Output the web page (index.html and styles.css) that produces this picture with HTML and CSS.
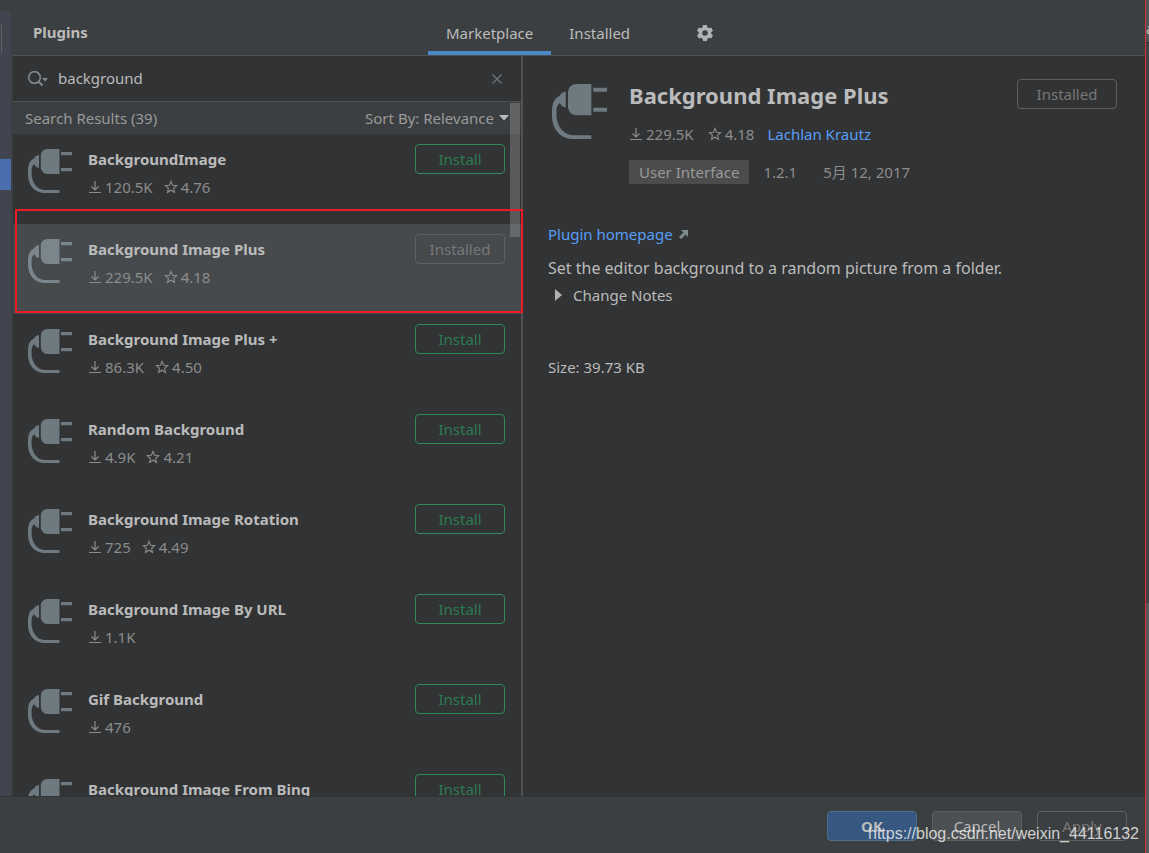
FILE: index.html
```
<!DOCTYPE html>
<html lang="en">
<head>
<meta charset="utf-8">
<title>Plugins</title>
<link rel="stylesheet" href="styles.css">
</head>
<body>
<svg class="sprite" aria-hidden="true">
  <symbol id="plug" viewBox="0 0 44 44">
    <path d="M19.500 0H31.500V25H19.500C15.500 25 12.800 21.500 12.800 18V7C12.800 3 15.500 0 19.500 0ZM33 3H44V6.200H33ZM33 19H44V22.200H33ZM11 6V19C8.500 18.500 7 17 6.300 15.200C4.500 16.500 3.600 18.500 3.600 21.500V26C4.300 34.500 9.500 40.500 16.500 41H31.500V44H15.500C7 43.500 .5 36.500 0 27V20.500C.3 14.500 2.500 11 6 9.500C7 7.500 8.500 6.300 11 6Z"/>
  </symbol>
  <symbol id="down" viewBox="0 0 14 14">
    <path d="M7 1V9.500M3.500 6.500L7 10L10.500 6.500M1 12.500H13" fill="none" stroke="currentColor" stroke-width="1.200"/>
  </symbol>
  <symbol id="star" viewBox="0 0 14 14">
    <path d="M7 1.500L8.600 5.300L12.700 5.600L9.600 8.300L10.500 12.300L7 10.200L3.500 12.300L4.400 8.300L1.300 5.600L5.400 5.300Z" fill="none" stroke="currentColor" stroke-width="1.100"/>
  </symbol>
</svg>
<div class="workspace">
  <div class="tree-edge"><span class="tree-field"></span><span class="tree-selection"></span></div>
  <main class="plugins">
    <header class="topbar">
      <h1 class="heading">Plugins</h1>
      <nav class="tabs">
        <button class="tab tab-active" type="button">Marketplace</button>
        <button class="tab" type="button">Installed</button>
        <button class="gear" type="button" aria-label="Settings"><svg width="18" height="18" viewBox="0 0 18 18"><path fill-rule="evenodd" d="M7 1H11L11.400 3.300L13 4.200L15.200 3.400L17 6.700L15.200 8.200V9.800L17 11.300L15.200 14.600L13 13.800L11.400 14.700L11 17H7L6.600 14.700L5 13.800L2.800 14.600L1 11.300L2.800 9.800V8.200L1 6.700L2.800 3.400L5 4.200L6.600 3.300ZM9 6.200A2.800 2.800 0 1 0 9 11.800A2.800 2.800 0 1 0 9 6.200Z"/></svg></button>
      </nav>
    </header>
    <div class="columns">
      <section class="results">
        <div class="search">
          <svg class="search-icon" width="20" height="16" viewBox="0 0 20 16"><circle cx="6.500" cy="6.500" r="5.800" fill="none" stroke="currentColor" stroke-width="1.500"/><path d="M10.500 10.500L14.500 14.500" stroke="currentColor" stroke-width="2"/><path d="M14 7H20L17 10.500Z" fill="currentColor"/></svg>
          <input class="search-input" type="text" aria-label="Search plugins" value="background">
          <button class="clear" type="button" aria-label="Clear"><svg width="10" height="10" viewBox="0 0 10 10"><path d="M.5.5L9.500 9.500M9.500.5L.5 9.500" stroke="currentColor" stroke-width="1.200"/></svg></button>
        </div>
        <div class="list-head">
          <span>Search Results (39)</span>
          <button class="sort" type="button">Sort By: Relevance<svg width="10" height="6" viewBox="0 0 10 6"><path d="M0 0H10L5 5.500Z"/></svg></button>
        </div>
        <ul class="list">
          <li class="row"><svg class="plug"><use href="#plug"/></svg><div class="info"><h2 class="name">BackgroundImage</h2><div class="meta"><svg class="ico"><use href="#down"/></svg><span class="count">120.5K</span><svg class="ico"><use href="#star"/></svg><span>4.76</span></div></div><button class="btn install" type="button">Install</button></li>
          <li class="row row-selected"><svg class="plug"><use href="#plug"/></svg><div class="info"><h2 class="name">Background Image Plus</h2><div class="meta"><svg class="ico"><use href="#down"/></svg><span class="count">229.5K</span><svg class="ico"><use href="#star"/></svg><span>4.18</span></div></div><button class="btn installed" type="button" disabled>Installed</button><span class="callout"></span></li>
          <li class="row"><svg class="plug"><use href="#plug"/></svg><div class="info"><h2 class="name">Background Image Plus +</h2><div class="meta"><svg class="ico"><use href="#down"/></svg><span class="count">86.3K</span><svg class="ico"><use href="#star"/></svg><span>4.50</span></div></div><button class="btn install" type="button">Install</button></li>
          <li class="row"><svg class="plug"><use href="#plug"/></svg><div class="info"><h2 class="name">Random Background</h2><div class="meta"><svg class="ico"><use href="#down"/></svg><span class="count">4.9K</span><svg class="ico"><use href="#star"/></svg><span>4.21</span></div></div><button class="btn install" type="button">Install</button></li>
          <li class="row"><svg class="plug"><use href="#plug"/></svg><div class="info"><h2 class="name">Background Image Rotation</h2><div class="meta"><svg class="ico"><use href="#down"/></svg><span class="count">725</span><svg class="ico"><use href="#star"/></svg><span>4.49</span></div></div><button class="btn install" type="button">Install</button></li>
          <li class="row"><svg class="plug"><use href="#plug"/></svg><div class="info"><h2 class="name">Background Image By URL</h2><div class="meta"><svg class="ico"><use href="#down"/></svg><span>1.1K</span></div></div><button class="btn install" type="button">Install</button></li>
          <li class="row"><svg class="plug"><use href="#plug"/></svg><div class="info"><h2 class="name">Gif Background</h2><div class="meta"><svg class="ico"><use href="#down"/></svg><span>476</span></div></div><button class="btn install" type="button">Install</button></li>
          <li class="row"><svg class="plug"><use href="#plug"/></svg><div class="info"><h2 class="name">Background Image From Bing</h2></div><button class="btn install" type="button">Install</button></li>
        </ul>
        <span class="scroll-thumb"></span>
      </section>
      <article class="detail">
        <div class="detail-head">
          <svg class="plug plug-large"><use href="#plug"/></svg>
          <div class="detail-info">
            <h2 class="title">Background Image Plus</h2>
            <div class="meta detail-meta"><svg class="ico"><use href="#down"/></svg><span class="count">229.5K</span><svg class="ico"><use href="#star"/></svg><span>4.18</span><a class="link author" href="#">Lachlan Krautz</a></div>
            <div class="tags"><span class="tag">User Interface</span><span class="version">1.2.1</span><span>5月 12, 2017</span></div>
          </div>
          <button class="btn installed installed-large" type="button" disabled>Installed</button>
        </div>
        <p class="homepage"><a class="link" href="#">Plugin homepage</a><svg width="9" height="9" viewBox="0 0 9 9"><path d="M2 0H9V7L6.500 4.500L2 9L0 7L4.500 2.500Z"/></svg></p>
        <p class="description">Set the editor background to a random picture from a folder.</p>
        <button class="notes" type="button"><svg width="7" height="12" viewBox="0 0 7 12"><path d="M0 0L7 6L0 12Z"/></svg>Change Notes</button>
        <p class="size">Size: 39.73 KB</p>
      </article>
    </div>
  </main>
</div>
<footer class="footer">
  <button class="btn ok" type="button">OK</button>
  <button class="btn cancel" type="button">Cancel</button>
  <button class="btn apply" type="button" disabled>Apply</button>
  <span class="watermark">https://blog.csdn.net/weixin_44116132</span>
</footer>
<aside class="behind"><span class="behind-tab">a</span><span class="behind-body"></span><span class="behind-thumb"></span></aside>
</body>
</html>
```
FILE: styles.css
```
* { box-sizing: border-box; margin: 0; padding: 0; }
body {
  position: relative;
  display: flex;
  flex-direction: column;
  height: 100vh;
  padding-right: 4px;
  overflow: hidden;
  background: #3c3f41;
  color: #bbbbbb;
  font: 15px/20px "Noto Sans", "Noto Sans CJK SC", sans-serif;
}
button, input { font: inherit; color: inherit; background: none; border: 0; outline: 0; }
svg { display: block; flex: none; fill: currentColor; }
.sprite { position: absolute; width: 0; height: 0; }
.workspace { display: flex; flex: 1; min-height: 0; overflow: hidden; }
.tree-edge { width: 11px; margin: 11px 2px 0 0; padding-top: 13px; background: #41454f; }
.tree-field { display: block; width: 2px; height: 29px; border: 1px solid #646464; border-left: 0; border-radius: 0 3px 3px 0; }
.tree-selection { display: block; height: 31px; margin-top: 106px; background: #4b6eaf; }
.plugins { display: flex; flex-direction: column; flex: 1; min-width: 0; }
.topbar { display: flex; height: 56px; padding-left: 20px; border-bottom: 1px solid #515151; flex: none; }
.heading { width: 395px; padding-top: 22px; font-size: 15px; line-height: 20px; }
.tabs { display: flex; }
.tab { padding: 14px 18px 0; border-bottom: 4px solid transparent; }
.tab-active { border-bottom-color: #4a88c7; }
.gear { margin-left: 48px; padding-top: 11px; color: #afb1b3; }
.columns { display: flex; flex: 1; min-height: 0; }
.results { position: relative; flex: 0 0 510px; border-right: 2px solid #515151; background: #313335; }
.search { display: flex; align-items: center; height: 46px; padding: 0 19px 0 15px; border-bottom: 1px solid #515151; }
.search-icon { color: #7f8b91; }
.search-input { flex: 1; min-width: 0; padding: 0 0 2px 10px; }
.clear { color: #73777a; }
.list-head { display: flex; align-items: center; justify-content: space-between; height: 32px; padding: 0 12px; background: #3c3f41; color: #999999; }
.sort { display: flex; align-items: center; gap: 5px; }
.sort svg { color: #bbbbbb; }
.list { list-style: none; }
.row { position: relative; display: flex; height: 90px; padding: 10px 16px 0 15px; }
.row-selected { background: #464a4d; }
.plug { width: 44px; height: 44px; margin-top: 5px; color: #6e7980; }
.row-selected .plug { color: #7a868b; }
.info { flex: 1; padding: 5px 0 0 16px; }
.name { font-size: 15px; line-height: 20px; }
.meta { display: flex; align-items: center; gap: 3px; margin-top: 8px; color: #8c8c8c; }
.ico { width: 14px; height: 14px; }
.count { margin-right: 8px; }
.btn { width: 90px; height: 30px; border: 1px solid; border-radius: 4px; line-height: 20px; }
.install { color: #2d7b50; border-color: #2f8a58; }
.installed { color: #777777; border-color: #5e6060; }
.callout { position: absolute; z-index: 2; top: -15px; right: -2px; bottom: 1px; left: 2px; border: 2px solid #ed1c24; }
.scroll-thumb { position: absolute; top: 47px; right: 1px; width: 10px; height: 134px; background: rgba(166, 166, 166, 0.35); }
.detail { flex: 1; min-width: 0; padding: 23px 28px 0 25px; background: #313335; }
.detail-head { display: flex; padding-left: 4px; }
.plug-large { width: 55px; height: 55px; }
.detail-info { flex: 1; padding-left: 22px; }
.title { font-size: 22px; line-height: 32px; }
.detail-meta { margin-top: 13px; }
.detail-meta .count { margin-right: 11px; }
.author { margin-left: 10px; }
.link { color: #589df6; text-decoration: none; }
.tags { display: flex; align-items: center; margin-top: 16px; color: #8c8c8c; }
.tag { padding: 2px 10px; background: #4c4c4c; color: #999999; }
.version { margin: 0 26px 0 14px; }
.installed-large { width: 100px; }
.homepage { display: flex; align-items: center; gap: 6px; margin-top: 40px; }
.homepage svg { color: #7f8b91; }
.description { margin-top: 14px; font-size: 16px; }
.notes { display: flex; align-items: center; gap: 11px; margin-top: 7px; padding-left: 7px; }
.notes svg { color: #afb1b3; }
.size { margin-top: 52px; }
.footer { position: relative; display: flex; justify-content: flex-end; gap: 15px; height: 57px; padding: 14px 18px 0 0; border-top: 1px solid #333537; flex: none; }
.ok { border-color: #4c708c; background: #365880; font-weight: 700; }
.cancel { border-color: #5e6060; background: #4c5052; }
.apply { border-color: #5e6060; color: #777777; }
.watermark { position: absolute; right: 6px; bottom: 9px; color: rgba(235, 235, 235, 0.85); font: 16px/20px "Liberation Sans", Arial, sans-serif; }
.behind { position: absolute; top: 0; right: 0; bottom: 0; display: flex; flex-direction: column; width: 4px; overflow: hidden; border-left: 1px solid #d9303a; background: #505254; }
.behind-tab { height: 43px; padding-top: 18px; border-bottom: 1px solid #2b2b2b; color: #c8c8b4; }
.behind-body { flex: 1; background: #3f4143; }
.behind-thumb { height: 250px; background: #58595b; }
```
